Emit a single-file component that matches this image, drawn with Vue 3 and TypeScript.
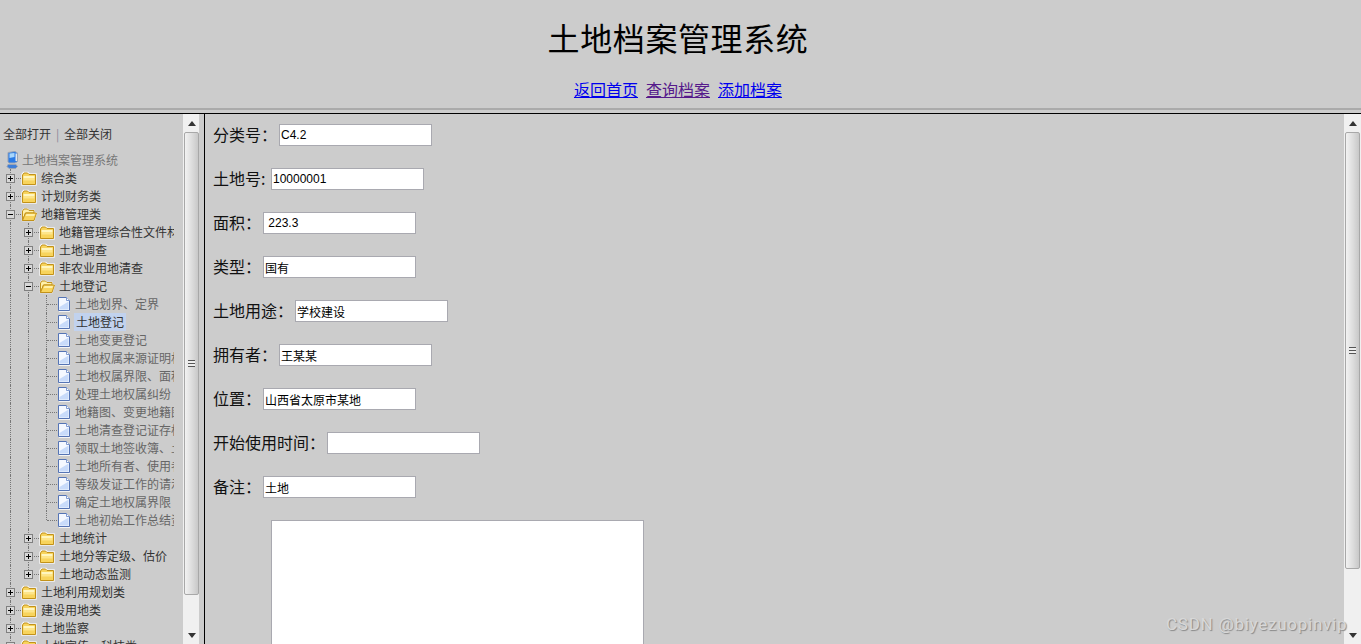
<script setup lang="ts">
type Kind = 'plus' | 'minus' | 'leaf'
interface Row { level: number; kind: Kind; label: string; last?: boolean; selected?: boolean }

const rows: Row[] = [
  { level: 1, kind: 'plus', label: '综合类' },
  { level: 1, kind: 'plus', label: '计划财务类' },
  { level: 1, kind: 'minus', label: '地籍管理类' },
  { level: 2, kind: 'plus', label: '地籍管理综合性文件材料' },
  { level: 2, kind: 'plus', label: '土地调查' },
  { level: 2, kind: 'plus', label: '非农业用地清查' },
  { level: 2, kind: 'minus', label: '土地登记' },
  { level: 3, kind: 'leaf', label: '土地划界、定界' },
  { level: 3, kind: 'leaf', label: '土地登记', selected: true },
  { level: 3, kind: 'leaf', label: '土地变更登记' },
  { level: 3, kind: 'leaf', label: '土地权属来源证明材料' },
  { level: 3, kind: 'leaf', label: '土地权属界限、面积' },
  { level: 3, kind: 'leaf', label: '处理土地权属纠纷' },
  { level: 3, kind: 'leaf', label: '地籍图、变更地籍图' },
  { level: 3, kind: 'leaf', label: '土地清查登记证存根' },
  { level: 3, kind: 'leaf', label: '领取土地签收簿、土地' },
  { level: 3, kind: 'leaf', label: '土地所有者、使用者' },
  { level: 3, kind: 'leaf', label: '等级发证工作的请示' },
  { level: 3, kind: 'leaf', label: '确定土地权属界限' },
  { level: 3, kind: 'leaf', label: '土地初始工作总结资料', last: true },
  { level: 2, kind: 'plus', label: '土地统计' },
  { level: 2, kind: 'plus', label: '土地分等定级、估价' },
  { level: 2, kind: 'plus', label: '土地动态监测', last: true },
  { level: 1, kind: 'plus', label: '土地利用规划类' },
  { level: 1, kind: 'plus', label: '建设用地类' },
  { level: 1, kind: 'plus', label: '土地监察' },
  { level: 1, kind: 'plus', label: '土地宣传、科技类' }
]

const fields = [
  { label: '分类号：', value: 'C4.2' },
  { label: '土地号:', value: '10000001', compact: true },
  { label: '面积：', value: ' 223.3' },
  { label: '类型：', value: '国有' },
  { label: '土地用途：', value: '学校建设' },
  { label: '拥有者：', value: '王某某' },
  { label: '位置：', value: '山西省太原市某地' },
  { label: '开始使用时间：', value: '' },
  { label: '备注：', value: '土地' }
]
</script>

<template>
  <div class="page">
    <header class="top">
      <h1 class="title">土地档案管理系统</h1>
      <nav class="nav">
        <a href="#" class="link">返回首页</a>
        <a href="#" class="link visited">查询档案</a>
        <a href="#" class="link">添加档案</a>
      </nav>
    </header>
    <div class="rule"></div>

    <div class="frames">
      <aside class="side">
        <div class="side-body">
          <div class="tree-actions">
            <span>全部打开</span><span class="sep">|</span><span>全部关闭</span>
          </div>
          <div class="root">
            <svg class="root-icon" width="14" height="18" viewBox="0 0 14 18">
              <path d="M3 1.500 10 0.500 12.500 2V10.500L10 12H4L3 11Z" fill="#2a7be6" stroke="#9aa4b4" />
              <path d="M4.500 2.500 9.500 2V6L4.500 7Z" fill="#a8d6fb" />
              <path d="M10.500 2.500H12V10H10.500Z" fill="#dfe6ee" />
              <path d="M3 13.500H11L12.500 15.500 10.500 17.500H4L2 15.500Z" fill="#3f7fd8" stroke="#9aa4b4" />
            </svg>
            <span class="root-label">土地档案管理系统</span>
          </div>
          <div v-for="(row, i) in rows" :key="i" class="row">
            <span v-if="row.level > 1" class="cell vline"></span>
            <span v-if="row.level > 2" class="cell vline"></span>
            <span class="cell joint" :class="{ end: row.last }">
              <span v-if="row.kind !== 'leaf'" class="box">
                <svg width="9" height="9" viewBox="0 0 9 9">
                  <path d="M2 4.500h5" stroke="#000" />
                  <path v-if="row.kind === 'plus'" d="M4.500 2v5" stroke="#000" />
                </svg>
              </span>
            </span>
            <svg v-if="row.kind === 'plus'" class="icon" width="16" height="16" viewBox="0 0 16 16">
              <path d="M1 4.500 2.500 2.500H7L8.500 4H15V15H1Z" fill="#fff" stroke="#f4f4f4" stroke-width="1.500" />
              <path d="M1.500 5 3 3H6.500L8 4.500H14.500V14.500H1.500Z" fill="#f8d45c" stroke="#c2921a" />
              <path d="M2.500 6H13.500V8H2.500Z" fill="#fff6c0" />
              <path d="M2.500 8H13.500V10.500H2.500Z" fill="#fde58a" />
            </svg>
            <svg v-else-if="row.kind === 'minus'" class="icon" width="16" height="16" viewBox="0 0 16 16">
              <path d="M1.500 5 3 3H6.500L8 4.500H13V7H15.500L13 14.500H1.500Z" fill="#fff" stroke="#f4f4f4" stroke-width="1.500" />
              <path d="M1.500 5 3 3H6.500L8 4.500H13V7H4.500L1.500 14.500Z" fill="#fff0a8" stroke="#c2921a" />
              <path d="M1.500 14.500 4.500 7H15.500L13 14.500Z" fill="#f8d45c" stroke="#c2921a" />
              <path d="M5.500 8H14L13.300 10H4.800Z" fill="#fff0a8" />
            </svg>
            <svg v-else class="icon doc" width="14" height="16" viewBox="0 0 14 16">
              <path d="M1.500 1.500H9.500L12.500 4.500V14.500H1.500Z" fill="#f4f8ff" stroke="#5574b4" />
              <path d="M9.500 1.500V4.500H12.500" fill="#fff" stroke="#7f9ad0" />
              <path d="M2.500 11 11.500 5.500V13.500H2.500Z" fill="#c8dbfa" />
              <path d="M2 15.500H13" stroke="#f4f4f4" />
            </svg>
            <span class="label" :class="{ leaf: row.kind === 'leaf', selected: row.selected }">{{ row.label }}</span>
          </div>
        </div>
        <div class="scrollbar">
          <span class="arrow up"></span>
          <div class="thumb side-thumb"><span class="grip"></span></div>
          <span class="arrow down"></span>
        </div>
      </aside>

      <main class="main">
        <form class="form" @submit.prevent>
          <div v-for="f in fields" :key="f.label" class="field">
            <label class="field-label" :class="{ compact: f.compact }">{{ f.label }}</label>
            <input class="field-input" type="text" :value="f.value" readonly />
          </div>
          <textarea class="notes" readonly></textarea>
        </form>
        <div class="scrollbar">
          <span class="arrow up"></span>
          <div class="thumb main-thumb"><span class="grip"></span></div>
          <span class="arrow down"></span>
        </div>
      </main>
    </div>
    <div class="watermark">CSDN @biyezuopinvip</div>
  </div>
</template>

<style>
html, body { margin: 0; height: 100%; overflow: hidden; background: #ccc; }
</style>

<style scoped>
.page {
  height: 644px;
  display: flex;
  flex-direction: column;
  background: #ccc;
  color: #000;
  font-family: "Noto Sans CJK SC", "Liberation Sans", sans-serif;
  overflow: hidden;
  position: relative;
}
.top { height: 108px; padding-right: 5px; text-align: center; flex: none; box-sizing: border-box; overflow: hidden; }
.title { margin: 15px 0 0; font-size: 32px; line-height: 44px; font-weight: 400; letter-spacing: 0.6px; color: #000; }
.nav { margin-top: 18px; display: flex; justify-content: center; gap: 8px; font-size: 16px; line-height: 24px; }
.link { color: #00e; text-decoration: underline; }
.link.visited { color: #551a8b; }
.rule { height: 2px; background: #aaa; flex: none; }
.frames {
  margin-top: 3px;
  border-top: 1px solid #000;
  flex: 1;
  min-height: 0;
  display: flex;
}
.side {
  width: 199px;
  flex: none;
  display: flex;
  margin-right: 5px;
  overflow: hidden;
}
.side-body { width: 174px; margin-right: 9px; flex: none; overflow: hidden; font-size: 12px; line-height: 18px; }
.tree-actions { display: flex; padding: 11px 0 0 3px; color: #333; height: 26px; }
.sep { width: 13px; text-align: center; color: #889; }
.root { height: 18px; display: flex; align-items: center; padding-left: 5px; color: #777; }
.root-icon { flex: none; margin-right: 3px; }
.root-label { white-space: nowrap; }
.row { height: 18px; display: flex; align-items: center; padding-left: 1px; color: #333; white-space: nowrap; position: relative; }
.cell { width: 18px; height: 18px; flex: none; position: relative; }
.vline::before, .joint::before {
  content: "";
  position: absolute;
  left: 9px;
  top: 0;
  bottom: 0;
  border-left: 1px dotted #777;
}
.joint.end::before { bottom: 9px; }
.joint::after {
  content: "";
  position: absolute;
  left: 10px;
  right: -2px;
  top: 9px;
  border-top: 1px dotted #777;
}
.box {
  position: absolute;
  left: 5px;
  top: 5px;
  width: 9px;
  height: 9px;
  box-sizing: border-box;
  border: 1px solid #808080;
  background: #d8d8d8;
  z-index: 1;
  overflow: hidden;
}
.box svg { display: block; margin: -1px; }
.icon { flex: none; margin-left: 2px; margin-right: 4px; }
.icon.doc { margin-right: 4px; }
.label { padding: 0; }
.label.leaf { color: #666; }
.label.selected { background: #c1d2ee; color: #333; padding: 0 2px; margin-left: -1px; }

.main { flex: 1; min-width: 0; display: flex; border-left: 1px solid #000; overflow: hidden; }
.form { flex: 1; min-width: 0; padding: 10px 0 0 8px; overflow: hidden; display: flex; flex-direction: column; align-items: flex-start; gap: 22px; }
.field { display: flex; align-items: center; gap: 2px; height: 22px; font-size: 16px; }
.field-label { white-space: nowrap; color: #111; padding-bottom: 2px; }
.field-label.compact { width: 56px; }
.field-input {
  width: 153px;
  height: 22px;
  box-sizing: border-box;
  border: 1px solid #a9a9b0;
  padding: 0 1px;
  margin: 0;
  background: #fff;
  color: #000;
  font-family: "Liberation Sans", "Noto Sans CJK SC", sans-serif;
  font-size: 12px;
  white-space: pre;
  outline: none;
}
.notes {
  margin: 0 0 0 58px;
  width: 373px;
  height: 240px;
  flex: none;
  box-sizing: border-box;
  border: 1px solid #a9a9b0;
  background: #fff;
  resize: none;
  outline: none;
}
.scrollbar {
  width: 17px;
  flex: none;
  height: 100%;
  background: #f0f0f0;
  display: flex;
  flex-direction: column;
  box-sizing: border-box;
  position: relative;
}
.arrow { height: 18px; flex: none; display: flex; align-items: center; justify-content: center; }
.arrow::before { content: ""; border-left: 4px solid transparent; border-right: 4px solid transparent; }
.arrow.up::before { border-bottom: 5px solid #333; }
.arrow.down { margin-top: auto; }
.arrow.down::before { border-top: 5px solid #333; }
.thumb {
  margin: 0 1px;
  box-sizing: border-box;
  border: 1px solid #a8a8a8;
  border-radius: 2px;
  background: linear-gradient(to right, #f2f2f2 0%, #e6e6e6 30%, #dcdcdc 55%, #c8c8c8 100%);
  display: flex;
  align-items: center;
  justify-content: center;
  flex: none;
}
.side-thumb { height: 463px; }
.main-thumb { height: 437px; }
.grip {
  width: 7px;
  height: 7px;
  background: repeating-linear-gradient(to bottom, #555 0, #555 1px, #eee 1px, #eee 3px);
}
.watermark {
  position: absolute;
  left: 1166px;
  top: 612px;
  font-family: "Roboto", "Liberation Sans", sans-serif;
  font-size: 17px;
  line-height: 24px;
  letter-spacing: 0.75px;
  color: #d8d8d8;
  text-shadow: 1px 1px 1px #888;
  white-space: nowrap;
}
</style>
